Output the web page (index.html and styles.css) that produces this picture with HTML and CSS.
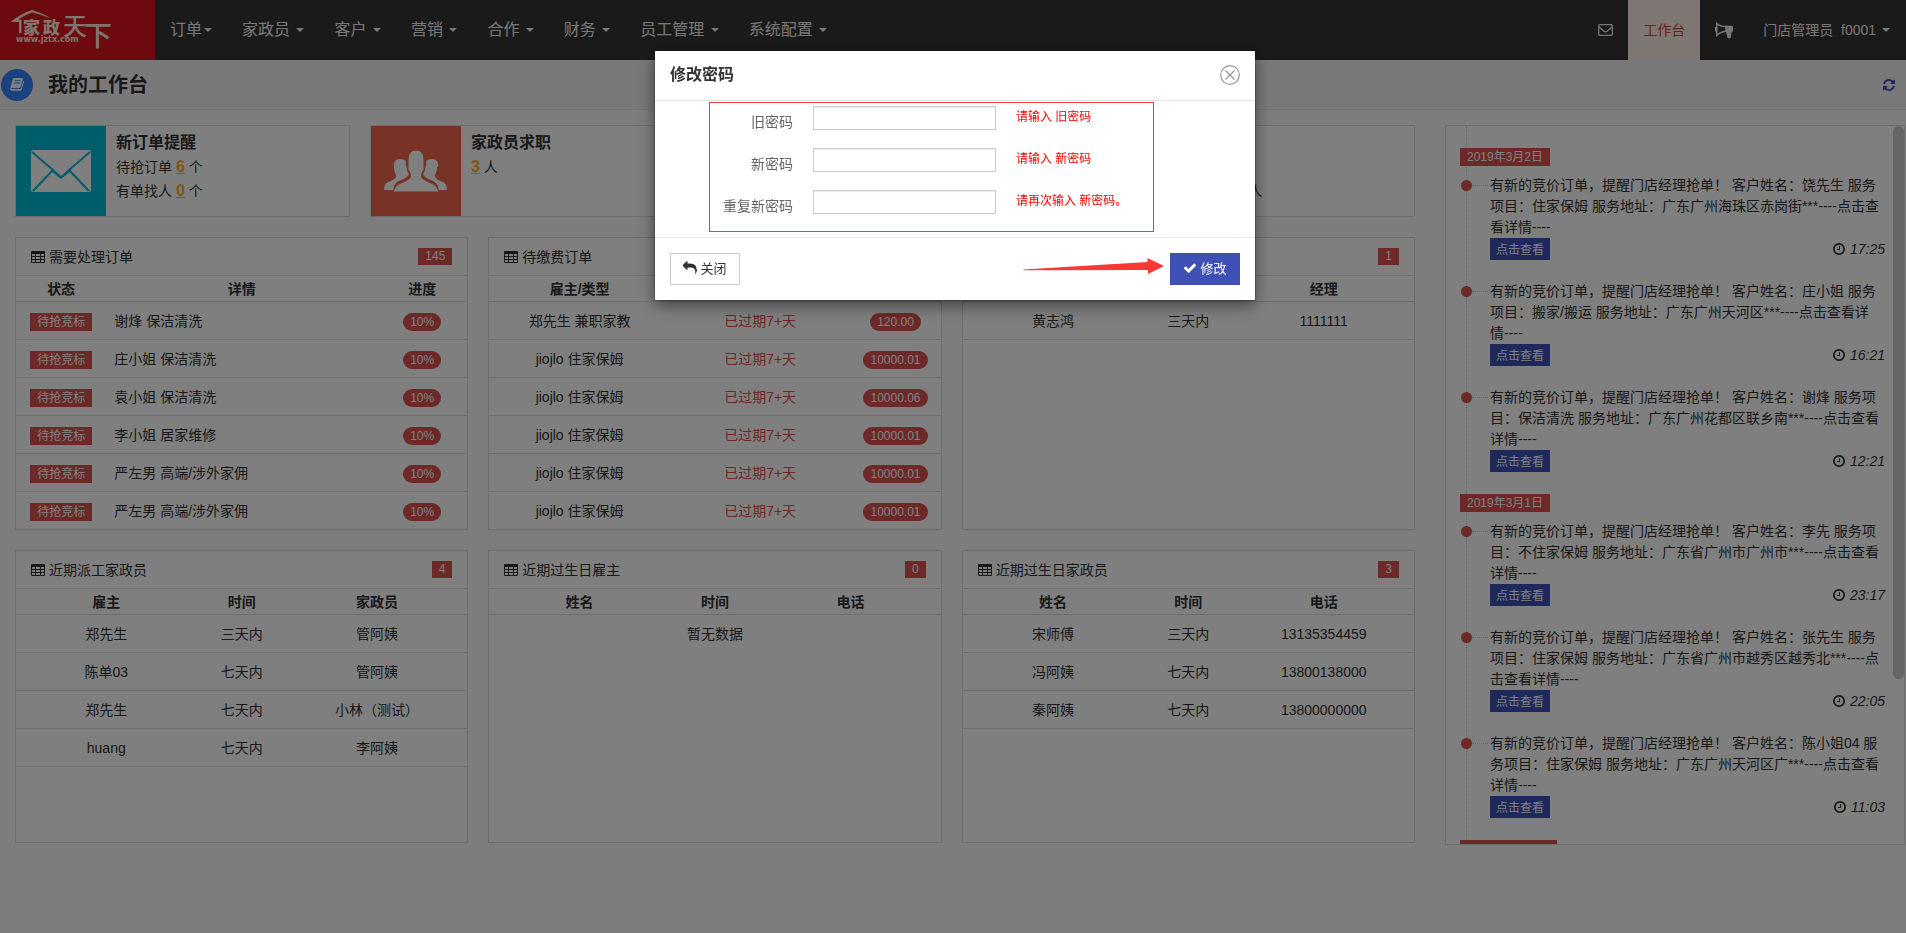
FILE: index.html
```html
<!DOCTYPE html>
<html lang="zh-CN">
<head>
<meta charset="utf-8">
<title>我的工作台</title>
<link rel="stylesheet" href="styles.css">
</head>
<body>
<svg class="sprite" aria-hidden="true">
  <symbol id="i-table" viewBox="0 0 14 12"><path fill="currentColor" fill-rule="evenodd" d="M1 0h12q1 0 1 1v10q0 1-1 1H1q-1 0-1-1V1q0-1 1-1zM1 3v2h3V3zM5 3v2h4V3zM10 3v2h3V3zM1 6v2h3V6zM5 6v2h4V6zM10 6v2h3V6zM1 9v2h3V9zM5 9v2h4V9zM10 9v2h3V9z"/></symbol>
  <symbol id="i-check" viewBox="0 0 1792 1792"><path fill="currentColor" d="M1671 566q0 40-28 68l-724 724-136 136q-28 28-68 28t-68-28l-136-136-362-362q-28-28-28-68t28-68l136-136q28-28 68-28t68 28l294 295 656-657q28-28 68-28t68 28l136 136q28 28 28 68z"/></symbol>
  <symbol id="i-reply" viewBox="0 0 1792 1792"><path fill="currentColor" d="M1792 1120q0 166-127 451-3 7-10.5 24t-13.5 30-13 22q-12 17-28 17-15 0-23.5-10t-8.5-25q0-9 2.5-26.5t2.5-23.5q5-68 5-123 0-112-19.5-200.5t-54-153.5-89-112-117-79.5-145-47-165.5-23.5-187.500-7h-224v256q0 26-19 45t-45 19-45-19l-512-512q-19-19-19-45t19-45l512-512q19-19 45-19t45 19 19 45v256h224q713 0 875 403 53 134 53 333z"/></symbol>
  <symbol id="i-refresh" viewBox="0 0 1792 1792"><path fill="currentColor" d="M1639 1056q0 5-1 7-64 268-268 434.500t-478 166.500q-146 0-282.500-55t-243.500-157l-129 129q-19 19-45 19t-45-19-19-45v-448q0-26 19-45t45-19h448q26 0 45 19t19 45-19 45l-137 137q71 66 161 102t187 36q134 0 250-65t186-179q11-17 53-117 8-23 30-23h192q13 0 22.500 9.500t9.500 22.500zm25-800v448q0 26-19 45t-45 19h-448q-26 0-45-19t-19-45 19-45l138-138q-148-137-349-137-134 0-250 65t-186 179q-11 17-53 117-8 23-30 23h-199q-13 0-22.500-9.500t-9.500-22.500v-7q65-268 270-434.500t480-166.500q146 0 284 55.500t245 156.500l130-129q19-19 45-19t45 19 19 45z"/></symbol>
  <symbol id="i-clock" viewBox="128 128 1536 1536"><path fill="currentColor" d="M1024 544v448q0 14-9 23t-23 9h-320q-14 0-23-9t-9-23v-64q0-14 9-23t23-9h224v-352q0-14 9-23t23-9h64q14 0 23 9t9 23zm416 352q0-148-73-273t-198-198-273-73-273 73-198 198-73 273 73 273 198 198 273 73 273-73 198-198 73-273zm224 0q0 209-103 385.500t-279.500 279.500-385.500 103-385.500-103-279.500-279.500-103-385.500 103-385.500 279.500-279.500 385.500-103 385.500 103 279.500 279.500 103 385.500z"/></symbol>
</svg>

<header class="navbar">
  <a class="logo" href="#" aria-label="家政天下">
    <svg width="155" height="60" viewBox="0 0 155 60">
      <path d="M19 33V22H10.500Q20 14 32 10q11 3 19 8.500Q40 14 32 12.500q-8 3-14 7h3.500v13.500z" fill="#ffeadc"/>
      <text class="logo-bold" x="23" y="34" font-size="17">家</text>
      <text class="logo-bold" x="43" y="34" font-size="17">政</text>
      <text class="logo-brush" x="63" y="35" font-size="24">天</text>
      <text class="logo-brush" x="84" y="46" font-size="28">下</text>
      <text class="logo-url" x="16" y="42" font-size="8">www.jztx.com</text>
    </svg>
  </a>
  <nav class="menu">
    <a href="#">订单<i class="caret"></i></a>
    <a href="#">家政员 <i class="caret"></i></a>
    <a href="#">客户 <i class="caret"></i></a>
    <a href="#">营销 <i class="caret"></i></a>
    <a href="#">合作 <i class="caret"></i></a>
    <a href="#">财务 <i class="caret"></i></a>
    <a href="#">员工管理 <i class="caret"></i></a>
    <a href="#">系统配置 <i class="caret"></i></a>
  </nav>
  <nav class="menu menu-user">
    <a href="#" aria-label="消息"><svg width="15" height="12" viewBox="0 0 15 12" fill="none" stroke="currentColor" stroke-width="1.300"><rect x=".7" y=".7" width="13.600" height="10.600" rx="1"/><path d="M1 3l5 4.300q1.500 1.200 3 0L14 3"/></svg></a>
    <a class="active" href="#">工作台</a>
    <a href="#" aria-label="公告"><svg width="18" height="17" viewBox="0 0 18 17"><path d="M1.800 1.500Q5 4.500 11 4.500L11.500 9Q6 9.500 1.800 13.500z" fill="none" stroke="currentColor" stroke-width="1.500"/><path d="M0 5h2v4.500H0zM10 3.700h7q1 0 1 1.500v3.300q0 1.500-1.500 1.500L16 15.500q-1.500 1.500-3.500.5-.5-3-1.500-6z" fill="currentColor"/></svg></a>
    <a href="#">门店管理员&nbsp; f0001 <i class="caret"></i></a>
  </nav>
</header>

<div class="titlebar">
  <span class="title-icon"><svg width="14" height="13" viewBox="0 0 14 13"><path fill="#fff" fill-rule="evenodd" d="M4 0h8q1.200 0 .9 1.200L10.500 9q-.3 1-1.300 1H2q-1 0-.6 1H10q.8 0 1-.8L13.300 3q.9.300.6 1.300L11.700 11.500q-.3 1.200-1.500 1.200H1.500Q0 12.500.2 10.500L2.800 1Q3.100 0 4 0zM5 2.300 4.800 3.200h5.500l.3-.9zM4.400 4.500l-.2.900h5.500l.3-.9z"/></svg></span>
  <h1>我的工作台</h1>
  <button class="refresh" type="button" aria-label="刷新"><svg width="14" height="14"><use href="#i-refresh"/></svg></button>
</div>

<main class="workspace">
  <div class="board">
    <section class="stats">
      <article class="stat">
        <div class="stat-icon cyan"><svg width="60" height="42" viewBox="0 0 60 42"><rect width="60" height="42" rx="2" fill="#fff"/><path d="M1 2 22 20 2 41M59 2 38 20 58 41" fill="none" stroke="#00bcd4" stroke-width="2"/><path d="M21 18l9 8 9-8 1 3-10 8-10-8z" fill="#00bcd4"/></svg></div>
        <div class="stat-text"><h2>新订单提醒</h2><p>待抢订单 <a href="#">6</a> 个</p><p>有单找人 <a href="#">0</a> 个</p></div>
      </article>
      <article class="stat">
        <div class="stat-icon coral"><svg width="64" height="42" viewBox="0 0 64 42" fill="#fff"><path d="M10 17q-1-8 6-8 4 0 6 2-1 4 1 8 0 3 2 5-2 4-8 6-6 2-7 7l-1 3H0q0-6 4-8 6-2 8-5 1-2-1-4-1-2-1-6zM54 17q1-8-6-8-4 0-6 2 1 4-1 8 0 3-2 5 2 4 8 6 6 2 7 7l1 3h8q0-6-4-8-6-2-8-5-1-2 1-4 1-2 1-6z"/><path d="M24 10q0-10 8-10t8 10v5q1 5-2 8-1 4 0 5 2 2 9 5 6 2 8 9H9q2-7 8-9 7-3 9-5 1-1 0-5-3-3-2-8z" stroke="#f0644c"/></svg></div>
        <div class="stat-text"><h2>家政员求职</h2><p><a href="#">3</a> 人</p></div>
      </article>
      <article class="stat">
        <div class="stat-icon cyan"></div>
        <div class="stat-text"><h2>客户</h2></div>
      </article>
      <article class="stat">
        <div class="stat-icon coral"></div>
        <div class="stat-text"><h2>家政员</h2><p>家政员</p><p>待审核 <a href="#">10</a> 人</p></div>
      </article>
    </section>

    <section class="panels">
      <article class="panel">
        <header><svg width="14" height="12"><use href="#i-table"/></svg><h3>需要处理订单</h3><span class="count">145</span></header>
        <div class="panel-body"><table class="cols-detail">
          <thead><tr><th>状态</th><th>详情</th><th>进度</th></tr></thead>
          <tbody>
            <tr><td><span class="tag">待抢竞标</span></td><td>谢烽 保洁清洗</td><td><span class="pill">10%</span></td></tr>
            <tr><td><span class="tag">待抢竞标</span></td><td>庄小姐 保洁清洗</td><td><span class="pill">10%</span></td></tr>
            <tr><td><span class="tag">待抢竞标</span></td><td>袁小姐 保洁清洗</td><td><span class="pill">10%</span></td></tr>
            <tr><td><span class="tag">待抢竞标</span></td><td>李小姐 居家维修</td><td><span class="pill">10%</span></td></tr>
            <tr><td><span class="tag">待抢竞标</span></td><td>严左男 高端/涉外家佣</td><td><span class="pill">10%</span></td></tr>
            <tr><td><span class="tag">待抢竞标</span></td><td>严左男 高端/涉外家佣</td><td><span class="pill">10%</span></td></tr>
          </tbody>
        </table></div>
      </article>
      <article class="panel">
        <header><svg width="14" height="12"><use href="#i-table"/></svg><h3>待缴费订单</h3><span class="count">6</span></header>
        <div class="panel-body"><table class="cols-amount">
          <thead><tr><th>雇主/类型</th><th>时间</th><th>金额</th></tr></thead>
          <tbody>
            <tr><td>郑先生 兼职家教</td><td class="overdue">已过期7+天</td><td><span class="pill">120.00</span></td></tr>
            <tr><td>jiojlo 住家保姆</td><td class="overdue">已过期7+天</td><td><span class="pill">10000.01</span></td></tr>
            <tr><td>jiojlo 住家保姆</td><td class="overdue">已过期7+天</td><td><span class="pill">10000.06</span></td></tr>
            <tr><td>jiojlo 住家保姆</td><td class="overdue">已过期7+天</td><td><span class="pill">10000.01</span></td></tr>
            <tr><td>jiojlo 住家保姆</td><td class="overdue">已过期7+天</td><td><span class="pill">10000.01</span></td></tr>
            <tr><td>jiojlo 住家保姆</td><td class="overdue">已过期7+天</td><td><span class="pill">10000.01</span></td></tr>
          </tbody>
        </table></div>
      </article>
      <article class="panel">
        <header><svg width="14" height="12"><use href="#i-table"/></svg><h3>近期面试</h3><span class="count">1</span></header>
        <div class="panel-body"><table class="cols-even">
          <thead><tr><th>姓名</th><th>时间</th><th>经理</th></tr></thead>
          <tbody><tr><td>黄志鸿</td><td>三天内</td><td>1111111</td></tr></tbody>
        </table></div>
      </article>
      <article class="panel">
        <header><svg width="14" height="12"><use href="#i-table"/></svg><h3>近期派工家政员</h3><span class="count">4</span></header>
        <div class="panel-body"><table class="cols-even">
          <thead><tr><th>雇主</th><th>时间</th><th>家政员</th></tr></thead>
          <tbody>
            <tr><td>郑先生</td><td>三天内</td><td>管阿姨</td></tr>
            <tr><td>陈单03</td><td>七天内</td><td>管阿姨</td></tr>
            <tr><td>郑先生</td><td>七天内</td><td>小林（测试）</td></tr>
            <tr><td>huang</td><td>七天内</td><td>李阿姨</td></tr>
          </tbody>
        </table></div>
      </article>
      <article class="panel">
        <header><svg width="14" height="12"><use href="#i-table"/></svg><h3>近期过生日雇主</h3><span class="count">0</span></header>
        <div class="panel-body"><table class="cols-even">
          <thead><tr><th>姓名</th><th>时间</th><th>电话</th></tr></thead>
          <tbody><tr class="empty"><td colspan="3">暂无数据</td></tr></tbody>
        </table></div>
      </article>
      <article class="panel">
        <header><svg width="14" height="12"><use href="#i-table"/></svg><h3>近期过生日家政员</h3><span class="count">3</span></header>
        <div class="panel-body"><table class="cols-even">
          <thead><tr><th>姓名</th><th>时间</th><th>电话</th></tr></thead>
          <tbody>
            <tr><td>宋师傅</td><td>三天内</td><td>13135354459</td></tr>
            <tr><td>冯阿姨</td><td>七天内</td><td>13800138000</td></tr>
            <tr><td>秦阿姨</td><td>七天内</td><td>13800000000</td></tr>
          </tbody>
        </table></div>
      </article>
    </section>
  </div>

  <aside class="timeline">
    <div class="timeline-list">
      <span class="date">2019年3月2日</span>
      <article class="event"><p>有新的竞价订单，提醒门店经理抢单！ 客户姓名：饶先生 服务项目：住家保姆 服务地址：广东广州海珠区赤岗街***----点击查看详情----</p><footer><button type="button">点击查看</button><time><svg width="12" height="12"><use href="#i-clock"/></svg>17:25</time></footer></article>
      <article class="event"><p>有新的竞价订单，提醒门店经理抢单！ 客户姓名：庄小姐 服务项目：搬家/搬运 服务地址：广东广州天河区***----点击查看详情----</p><footer><button type="button">点击查看</button><time><svg width="12" height="12"><use href="#i-clock"/></svg>16:21</time></footer></article>
      <article class="event"><p>有新的竞价订单，提醒门店经理抢单！ 客户姓名：谢烽 服务项目：保洁清洗 服务地址：广东广州花都区联乡南***----点击查看详情----</p><footer><button type="button">点击查看</button><time><svg width="12" height="12"><use href="#i-clock"/></svg>12:21</time></footer></article>
      <span class="date">2019年3月1日</span>
      <article class="event"><p>有新的竞价订单，提醒门店经理抢单！ 客户姓名：李先 服务项目：不住家保姆 服务地址：广东省广州市广州市***----点击查看详情----</p><footer><button type="button">点击查看</button><time><svg width="12" height="12"><use href="#i-clock"/></svg>23:17</time></footer></article>
      <article class="event"><p>有新的竞价订单，提醒门店经理抢单！ 客户姓名：张先生 服务项目：住家保姆 服务地址：广东省广州市越秀区越秀北***----点击查看详情----</p><footer><button type="button">点击查看</button><time><svg width="12" height="12"><use href="#i-clock"/></svg>22:05</time></footer></article>
      <article class="event"><p>有新的竞价订单，提醒门店经理抢单！ 客户姓名：陈小姐04 服务项目：住家保姆 服务地址：广东广州天河区广***----点击查看详情----</p><footer><button type="button">点击查看</button><time><svg width="12" height="12"><use href="#i-clock"/></svg>11:03</time></footer></article>
      <span class="date date-next"></span>
    </div>
    <div class="scroll-thumb"></div>
  </aside>
</main>

<div class="backdrop">
  <div class="modal" role="dialog" aria-modal="true" aria-labelledby="modal-title">
    <header class="modal-head">
      <h2 id="modal-title">修改密码</h2>
      <button class="modal-close" type="button" aria-label="关闭"><svg width="20" height="20" viewBox="0 0 20 20" fill="none" stroke="#999" stroke-width="1.200"><circle cx="10" cy="10" r="9.300"/><path d="M5.500 5.500l9 9M14.500 5.500l-9 9"/></svg></button>
    </header>
    <form class="password-form" id="password-form">
      <label for="old">旧密码</label><input id="old" type="password"><span>请输入 旧密码</span>
      <label for="new">新密码</label><input id="new" type="password"><span>请输入 新密码</span>
      <label for="again">重复新密码</label><input id="again" type="password"><span>请再次输入 新密码。</span>
    </form>
    <footer class="modal-foot">
      <button class="btn" type="button"><svg width="14" height="14"><use href="#i-reply"/></svg>关闭</button>
      <svg class="arrow" width="141" height="22" viewBox="0 0 141 22"><path d="M0 11.500 124.500 4V0L141 8l-16 8v-4L1 12.200z" fill="#fb3838"/></svg>
      <button class="btn primary" type="submit" form="password-form"><svg width="14" height="14"><use href="#i-check"/></svg>修改</button>
    </footer>
  </div>
</div>
</body>
</html>
```
FILE: styles.css
```css
* { box-sizing: border-box; }

body {
  margin: 0;
  min-height: 100vh;
  overflow: hidden;
  background: #fafafa;
  color: #333;
  font: 14px/20px "Liberation Sans", "Noto Sans CJK SC", sans-serif;
}

h1, h2, h3, p { margin: 0; }
a { color: inherit; text-decoration: none; }
button { font-family: inherit; cursor: pointer; }
svg { flex: none; }
.sprite { position: absolute; width: 0; height: 0; }

/* top bar */
.navbar { display: flex; height: 60px; background: #353535; color: #eee; }
.logo { width: 155px; background: #d81420; }
.logo svg { display: block; }
.logo text { fill: #ffeadc; font-family: "Noto Sans CJK SC", sans-serif; }
.logo .logo-bold { font-weight: 900; }
.logo .logo-brush { font-weight: 500; }
.logo .logo-url { font-family: "DejaVu Sans", sans-serif; font-weight: bold; }

.menu { display: flex; font-size: 16px; }
.menu a { display: flex; align-items: center; padding: 0 15px; white-space: pre; }
.menu-user { margin-left: auto; padding-right: 1px; font-size: 14px; }
.menu-user .active { background: #ffeee6; color: #d9413f; }
.caret {
  margin-left: 2px;
  border: 4px solid transparent;
  border-top-color: currentColor;
  border-bottom: 0;
}

.titlebar {
  display: flex;
  align-items: center;
  height: 50px;
  padding: 0 10px 0 1px;
  background: #f2f2f2;
  border-bottom: 1px solid #e6e6e6;
}
.title-icon {
  display: flex;
  align-items: center;
  justify-content: center;
  width: 32px;
  height: 32px;
  border-radius: 50%;
  background: #3584fc;
}
.titlebar h1 { margin-left: 15px; font-size: 20px; font-weight: bold; }
.refresh { display: flex; margin-left: auto; padding: 0; border: 0; background: none; color: #3f51b5; }

/* page grid */
.workspace {
  display: grid;
  grid-template-columns: minmax(0, 1fr) 460px;
  align-items: start;
  gap: 30px;
  padding: 15px 1px 0 15px;
}
.stats { display: grid; grid-template-columns: repeat(4, 1fr); gap: 20px; }
.stat { display: flex; background: #fff; border: 1px solid #ddd; }
.stat-icon { display: flex; align-items: center; justify-content: center; width: 90px; height: 90px; }
.cyan { background: #00bcd4; }
.coral { background: #f0644c; }
.stat-text { padding: 5px 10px; line-height: 24px; }
.stat-text h2 { font-size: 16px; line-height: 24px; }
.stat-text a { color: #ffa828; font-size: 16px; font-weight: bold; text-decoration: underline; }

.panels { display: grid; grid-template-columns: repeat(3, 1fr); gap: 20px; margin-top: 20px; }
.panel { background: #fff; border: 1px solid #ddd; }
.panel > header {
  display: flex;
  align-items: center;
  gap: 4px;
  height: 38px;
  padding: 0 15px;
  border-bottom: 1px solid #ddd;
}
.panel h3 { font-size: 14px; font-weight: normal; }
.count {
  margin-left: auto;
  padding: 0 7px;
  background: #d9534f;
  color: #fff;
  font-size: 12px;
  line-height: 17px;
}
.panel-body { height: 253px; overflow: hidden; }
.panel table { width: 100%; table-layout: fixed; border-collapse: separate; border-spacing: 0; }
.panel th, .panel td { padding: 0 8px; border-bottom: 1px solid #ddd; text-align: center; }
.panel th { height: 26px; }
.panel td { height: 38px; }
.panel .empty td { border-bottom: 0; }
.cols-detail th { width: 20%; }
.cols-detail th:nth-child(2) { width: 60%; }
.cols-detail td:nth-child(2) { text-align: left; }
.cols-amount th { width: 40%; }
.cols-amount th:nth-child(3) { width: 20%; }
.cols-even th { width: 40%; }
.cols-even th:nth-child(2) { width: 20%; }
.overdue { color: #d9534f; }

.tag, .pill, .date {
  display: inline-block;
  padding: 0 7px;
  background: #d9534f;
  color: #fff;
  font-size: 12px;
  line-height: 18px;
  vertical-align: middle;
}
.pill { border-radius: 9px; }

/* event feed */
.timeline { position: relative; height: 720px; overflow: hidden; background: #fff; border: 1px solid #ddd; }
.timeline-list { position: relative; padding: 21px 19px 0 14px; }
.timeline-list::before {
  content: "";
  position: absolute;
  top: 0;
  bottom: 0;
  left: 20px;
  border-left: 1px dotted #ccc;
}
.date { display: table; position: relative; margin: 1px 0 9px; }
.date-next { width: 97px; height: 18px; }
.event { position: relative; margin-left: 30px; padding-bottom: 21px; }
.event::before {
  content: "";
  position: absolute;
  top: 5px;
  left: -29px;
  width: 11px;
  height: 11px;
  border-radius: 50%;
  background: #d9534f;
}
.event::after {
  content: "";
  position: absolute;
  top: 10px;
  left: -18px;
  width: 16px;
  border-top: 1px dotted #ccc;
}
.event p { padding-right: 4px; line-height: 21px; }
.event footer { display: flex; align-items: center; justify-content: space-between; }
.event button { height: 22px; padding: 0 6px 2px; border: 0; background: #3f51b5; color: #fff; font-size: 12px; }
.event time { display: flex; align-items: center; gap: 5px; font-style: italic; }
.scroll-thumb {
  position: absolute;
  top: 0;
  right: 0;
  width: 11px;
  height: 553px;
  border-radius: 6px;
  background: #ccc;
}

/* dialog */
.backdrop {
  position: fixed;
  inset: 0;
  display: flex;
  align-items: flex-start;
  justify-content: center;
  padding: 51px 0 0 4px;
  background: rgba(0, 0, 0, .5);
}
.modal { width: 600px; background: #fff; box-shadow: 0 0 0 1px rgba(0, 0, 0, .2), 0 5px 15px rgba(0, 0, 0, .5); }
.modal-head {
  display: flex;
  align-items: center;
  justify-content: space-between;
  height: 50px;
  padding: 0 15px 2px;
  border-bottom: 1px solid #e5e5e5;
}
.modal-head h2 { font-size: 16px; font-weight: bold; }
.modal-close { display: flex; padding: 0; border: 0; background: none; }
.password-form {
  display: grid;
  grid-template-columns: 83px 183px 1fr;
  grid-auto-rows: 32px;
  gap: 10px 20px;
  align-items: start;
  width: 445px;
  margin: 1px 0 5px 54px;
  padding: 3px 0 9px;
  border: 1px solid #f83a3a;
}
.password-form label { color: #666; line-height: 32px; text-align: right; }
.password-form input { width: 100%; height: 24px; border: 1px solid #ccc; box-shadow: inset 0 1px 1px rgba(0, 0, 0, .08); }
.password-form span { color: #f00; font-size: 12px; line-height: 22px; }
.modal-foot { display: flex; align-items: center; gap: 6px; padding: 15px; border-top: 1px solid #e5e5e5; }
.arrow { margin-left: auto; }
.btn {
  display: flex;
  align-items: center;
  justify-content: center;
  gap: 3px;
  width: 70px;
  height: 32px;
  padding: 0 0 3px;
  border: 1px solid #ccc;
  background: #fff;
  color: #333;
  font-size: 13px;
}
.btn.primary { border-color: #3f51b5; background: #3f51b5; color: #fff; }
```
